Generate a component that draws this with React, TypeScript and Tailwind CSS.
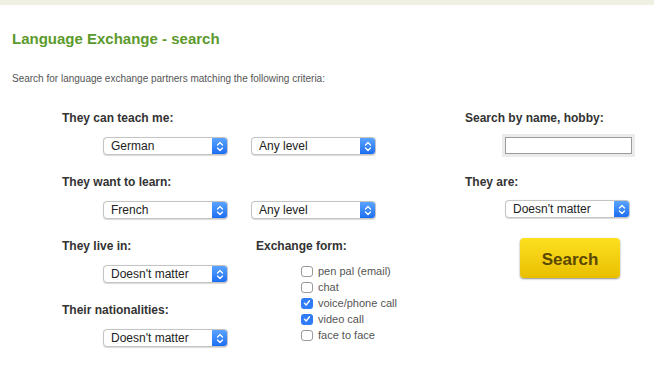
import React from "react";

function Chevrons() {
  return (
    <svg width="8" height="11" viewBox="0 0 8 11" fill="none">
      <path d="M1.5 4 L4 1.5 L6.5 4" stroke="white" strokeWidth="1.3" strokeLinecap="round" strokeLinejoin="round" />
      <path d="M1.5 7 L4 9.5 L6.5 7" stroke="white" strokeWidth="1.3" strokeLinecap="round" strokeLinejoin="round" />
    </svg>
  );
}

function Select({ value }: { value: string }) {
  return (
    <div className="flex h-[18px] w-[125px] items-stretch overflow-hidden rounded-[4px] border border-[#c4c4c4] bg-white shadow-[0_0.5px_1px_rgba(0,0,0,0.15)]">
      <div className="flex flex-1 items-center pl-[7px] text-[12px] leading-none text-[#222]">{value}</div>
      <div className="flex w-[15px] items-center justify-center bg-gradient-to-b from-[#5aa3ff] to-[#1c6ef2]">
        <Chevrons />
      </div>
    </div>
  );
}

function Label({ children }: { children: React.ReactNode }) {
  return <div className="h-[14px] text-[12px] font-bold leading-[14px] text-[#333]">{children}</div>;
}

function Check({ checked, label }: { checked?: boolean; label: string }) {
  return (
    <div className="flex h-[16px] items-center">
      {checked ? (
        <div className="flex h-[11px] w-[12px] items-center justify-center rounded-[3px] bg-[#2f7cf6]">
          <svg width="8" height="8" viewBox="0 0 8 8" fill="none">
            <path d="M1.5 4.2 L3.2 6 L6.5 1.8" stroke="white" strokeWidth="1.4" strokeLinecap="round" strokeLinejoin="round" />
          </svg>
        </div>
      ) : (
        <div className="h-[11px] w-[12px] rounded-[3px] border border-[#9a9a9a] bg-white" />
      )}
      <span className="ml-[5px] text-[11px] leading-none text-[#555]">{label}</span>
    </div>
  );
}

export default function App() {
  return (
    <div className="h-[372px] w-[654px] overflow-hidden bg-white" style={{ fontFamily: '"Liberation Sans", Arial, sans-serif' }}>
      <div className="h-[5px] bg-[#eff0e1]" />
      <div className="mt-[25px] pl-[12px] text-[15px] font-bold leading-[18px] text-[#5b9a2c]">Language Exchange - search</div>
      <div className="mt-[24px] pl-[12px] text-[10px] leading-[13px] text-[#555]">
        Search for language exchange partners matching the following criteria:
      </div>
      <div className="mt-[26px] flex pl-[62px]">
        <div className="w-[403px]">
          <Label>They can teach me:</Label>
          <div className="mt-[12px] ml-[41px] flex gap-[23px]">
            <Select value="German" />
            <Select value="Any level" />
          </div>
          <div className="mt-[20px]">
            <Label>They want to learn:</Label>
          </div>
          <div className="mt-[12px] ml-[41px] flex gap-[23px]">
            <Select value="French" />
            <Select value="Any level" />
          </div>
          <div className="mt-[20px] flex">
            <div className="w-[194px]">
              <Label>They live in:</Label>
              <div className="mt-[12px] ml-[41px]">
                <Select value="Doesn't matter" />
              </div>
              <div className="mt-[20px]">
                <Label>Their nationalities:</Label>
              </div>
              <div className="mt-[12px] ml-[41px]">
                <Select value="Doesn't matter" />
              </div>
            </div>
            <div>
              <Label>Exchange form:</Label>
              <div className="mt-[10px] ml-[45px] flex flex-col">
                <Check label="pen pal (email)" />
                <Check label="chat" />
                <Check checked label="voice/phone call" />
                <Check checked label="video call" />
                <Check label="face to face" />
              </div>
            </div>
          </div>
        </div>
        <div>
          <Label>Search by name, hobby:</Label>
          <div className="mt-[9px] ml-[37px] h-[23px] w-[133px] bg-[#ebebeb] p-[3px]">
            <div className="h-[17px] w-full border border-[#9b9b9b] bg-white" />
          </div>
          <div className="mt-[18px]">
            <Label>They are:</Label>
          </div>
          <div className="mt-[11px] ml-[40px]">
            <Select value="Doesn't matter" />
          </div>
          <div className="mt-[20px] ml-[55px] flex h-[40px] w-[100px] items-center justify-center rounded-[4px] bg-gradient-to-b from-[#fde01e] to-[#e9bf00] pt-[3px] text-[17px] font-bold text-[#5a4800] shadow-[0_1px_2px_rgba(0,0,0,0.45)]">
            Search
          </div>
        </div>
      </div>
    </div>
  );
}
